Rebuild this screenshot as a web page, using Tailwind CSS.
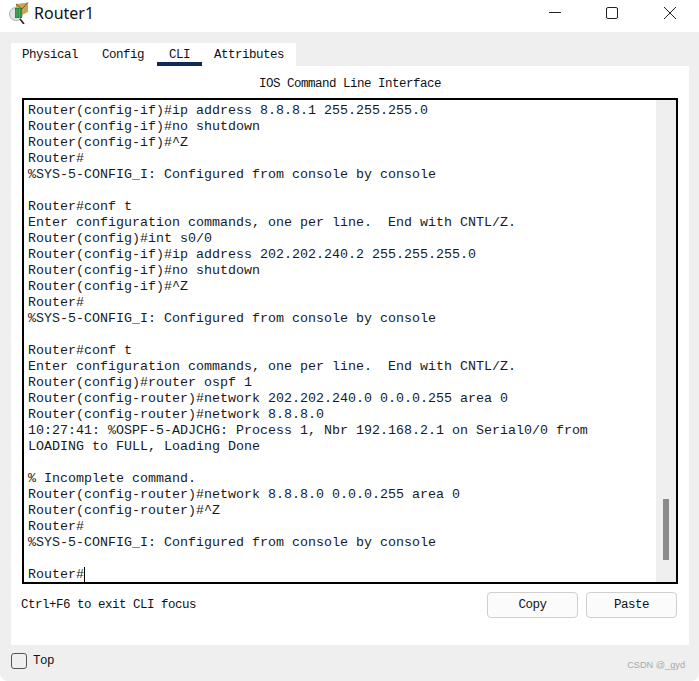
<!DOCTYPE html>
<html lang="en">
<head>
    <meta charset="UTF-8">
    <title>Router1</title>
    <script src="https://cdn.jsdelivr.net/npm/@tailwindcss/browser@4"></script>
</head>
<body class="bg-white overflow-hidden">
    <div class="relative w-[699px] h-[681px] bg-[#efefef] rounded-b-[8px] font-['Liberation_Mono',monospace] text-black">
        <!-- title bar -->
        <div class="h-[32px] bg-white flex items-center pb-[6px]">
            <svg class="ml-[9px] w-[20px] h-[22px]" viewBox="0 0 20 22">
                <circle cx="7" cy="12" r="6.5" fill="#dfe6e0" stroke="#a9b0ac" stroke-width="1"/>
                <path d="M7 2 L19 0.5 L19 10 L13 13 L7 7 Z" fill="#c9a557"/>
                <path d="M7 2 L13 7 L19 0.5" fill="none" stroke="#7a5a20" stroke-width="1"/>
                <rect x="6" y="6" width="7" height="10" fill="#1d7a35"/>
                <path d="M6 8h7M6 10h7M6 12h7M6 14h7M8 6v10M10.5 6v10" stroke="#5fc46f" stroke-width="0.6"/>
                <path d="M11 17 L15 22" stroke="#222" stroke-width="1.6"/>
            </svg>
            <span class="ml-[5px] text-[16px] text-[#111] font-['Noto_Sans',sans-serif] leading-none">Router1</span>
            <div class="ml-auto flex items-center h-full">
                <svg class="w-[14px] h-[14px] mr-[44px]" viewBox="0 0 14 14"><path d="M1 6.5h12" stroke="#222" stroke-width="1"/></svg>
                <svg class="w-[14px] h-[14px] mr-[44px] -ml-px" viewBox="0 0 14 14"><rect x="1.5" y="1.5" width="11" height="11" rx="1.5" fill="none" stroke="#222" stroke-width="1"/></svg>
                <svg class="w-[14px] h-[14px] mr-[22px]" viewBox="0 0 14 14"><path d="M1 1l12 12M13 1L1 13" stroke="#222" stroke-width="1"/></svg>
            </div>
        </div>

        <div class="pt-[11px] pl-[11px] pr-[10px]">
            <!-- tabs -->
            <div class="w-[285px] h-[23px] bg-white flex text-[12.5px] tracking-[-0.5px] leading-[24px] text-[#111]">
                <div class="pl-[11px] w-[80px]">Physical</div>
                <div class="pl-[11px] w-[66px]">Config</div>
                <div class="relative w-[45px] text-center">CLI<div class="absolute left-0 right-0 bottom-0 h-[4px] bg-[#0f2a55]"></div></div>
                <div class="pl-[12px]">Attributes</div>
            </div>

            <!-- panel -->
            <div class="h-[579px] bg-white flex flex-col">
                <div class="h-[32px] text-center text-[12.5px] tracking-[-0.5px] leading-[36px] text-[#111]">IOS Command Line Interface</div>
                <div class="mx-[11px] h-[486px] border-2 border-black flex">
                    <pre class="flex-1 pl-[4px] pt-[3px] overflow-hidden font-['Liberation_Mono',monospace] text-[13.33px] leading-[16px] text-[#1a1a1a]">Router(config-if)#ip address 8.8.8.1 255.255.255.0
Router(config-if)#no shutdown
Router(config-if)#^Z
Router#
%SYS-5-CONFIG_I: Configured from console by console

Router#conf t
Enter configuration commands, one per line.  End with CNTL/Z.
Router(config)#int s0/0
Router(config-if)#ip address 202.202.240.2 255.255.255.0
Router(config-if)#no shutdown
Router(config-if)#^Z
Router#
%SYS-5-CONFIG_I: Configured from console by console

Router#conf t
Enter configuration commands, one per line.  End with CNTL/Z.
Router(config)#router ospf 1
Router(config-router)#network 202.202.240.0 0.0.0.255 area 0
Router(config-router)#network 8.8.8.0
10:27:41: %OSPF-5-ADJCHG: Process 1, Nbr 192.168.2.1 on Serial0/0 from
LOADING to FULL, Loading Done

% Incomplete command.
Router(config-router)#network 8.8.8.0 0.0.0.255 area 0
Router(config-router)#^Z
Router#
%SYS-5-CONFIG_I: Configured from console by console

Router#<span class="inline-block w-px h-[16px] bg-black align-top"></span></pre>
                    <div class="w-[20px] bg-[#efefef] flex justify-center">
                        <div class="w-[6px] h-[61px] mt-[399px] bg-[#8c8c8c]"></div>
                    </div>
                </div>
                <div class="flex items-center mx-[11px] mt-[7px] h-[27px] text-[12.5px] tracking-[-0.5px] text-[#111]">
                    <span class="pt-[1px] -ml-px">Ctrl+F6 to exit CLI focus</span>
                    <div class="ml-auto flex gap-[8px] mr-[1px]">
                        <button class="w-[91px] h-[26px] pt-[1px] bg-[#fbfbfb] border border-[#cfcfcf] rounded-[4px]">Copy</button>
                        <button class="w-[91px] h-[26px] pt-[1px] bg-[#fbfbfb] border border-[#cfcfcf] rounded-[4px]">Paste</button>
                    </div>
                </div>
            </div>

            <!-- footer -->
            <div class="flex items-center h-[31px] text-[12.5px] tracking-[-0.5px] text-[#111]">
                <div class="w-[16px] h-[16px] border border-[#555] rounded-[3px]"></div>
                <span class="ml-[6px] pt-[1px]">Top</span>
            </div>
        </div>
        <div class="absolute right-[14px] top-[661px] text-[9.2px] leading-none text-[#a8a8a8] font-['Liberation_Sans',sans-serif]">CSDN @_gyd</div>
    </div>
</body>
</html>
